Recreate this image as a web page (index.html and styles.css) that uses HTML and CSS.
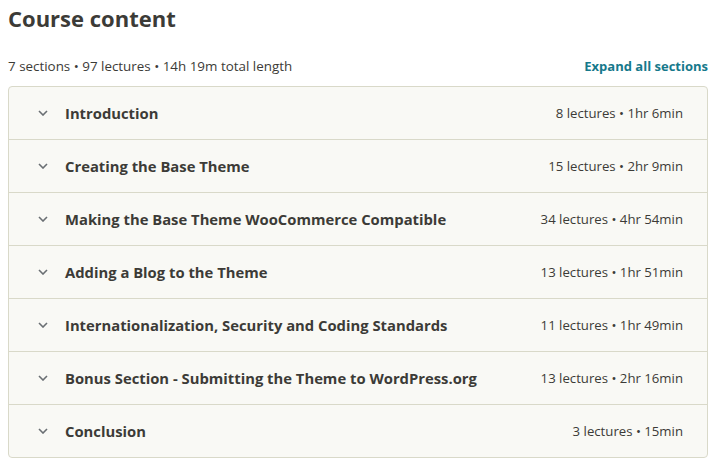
FILE: index.html
```html
<!DOCTYPE html>
<html>
<head>
<meta charset="utf-8">
<link rel="stylesheet" href="styles.css">
</head>
<body>
<div class="page">
  <h2 class="title">Course content</h2>
  <div class="summary">
    <span class="stats">7 sections • 97 lectures • 14h 19m total length</span>
    <a class="expand" href="#">Expand all sections</a>
  </div>
  <div class="sections">
    <div class="row"><svg class="chev" viewBox="0 0 10 6"><path d="M1 1l4 4 4-4" fill="none" stroke="#6a6f73" stroke-width="1.6"/></svg><span class="name">Introduction</span><span class="meta">8 lectures • 1hr 6min</span></div>
    <div class="row"><svg class="chev" viewBox="0 0 10 6"><path d="M1 1l4 4 4-4" fill="none" stroke="#6a6f73" stroke-width="1.6"/></svg><span class="name">Creating the Base Theme</span><span class="meta">15 lectures • 2hr 9min</span></div>
    <div class="row"><svg class="chev" viewBox="0 0 10 6"><path d="M1 1l4 4 4-4" fill="none" stroke="#6a6f73" stroke-width="1.6"/></svg><span class="name">Making the Base Theme WooCommerce Compatible</span><span class="meta">34 lectures • 4hr 54min</span></div>
    <div class="row"><svg class="chev" viewBox="0 0 10 6"><path d="M1 1l4 4 4-4" fill="none" stroke="#6a6f73" stroke-width="1.6"/></svg><span class="name">Adding a Blog to the Theme</span><span class="meta">13 lectures • 1hr 51min</span></div>
    <div class="row"><svg class="chev" viewBox="0 0 10 6"><path d="M1 1l4 4 4-4" fill="none" stroke="#6a6f73" stroke-width="1.6"/></svg><span class="name">Internationalization, Security and Coding Standards</span><span class="meta">11 lectures • 1hr 49min</span></div>
    <div class="row"><svg class="chev" viewBox="0 0 10 6"><path d="M1 1l4 4 4-4" fill="none" stroke="#6a6f73" stroke-width="1.6"/></svg><span class="name">Bonus Section - Submitting the Theme to WordPress.org</span><span class="meta">13 lectures • 2hr 16min</span></div>
    <div class="row"><svg class="chev" viewBox="0 0 10 6"><path d="M1 1l4 4 4-4" fill="none" stroke="#6a6f73" stroke-width="1.6"/></svg><span class="name">Conclusion</span><span class="meta">3 lectures • 15min</span></div>
  </div>
</div>
</body>
</html>
```
FILE: styles.css
```css
* { box-sizing: border-box; }
body {
  margin: 0;
  background: #fff;
  font-family: "Open Sans", "Noto Sans", sans-serif;
  color: #3c3b37;
}
.page {
  padding: 2px 10px 0 8px;
}
.title {
  margin: 0;
  font-size: 22px;
  font-weight: 700;
  line-height: 32px;
  color: #3c3b37;
}
.summary {
  display: flex;
  justify-content: space-between;
  align-items: center;
  margin-top: 21px;
  height: 22px;
}
.stats {
  font-size: 13.4px;
  line-height: 20px;
}
.expand {
  font-size: 13px;
  font-weight: 700;
  color: #16798b;
  text-decoration: none;
  line-height: 20px;
}
.sections {
  margin-top: 9px;
  border: 1px solid #d9d9c9;
  border-radius: 4px;
  background: #f9f9f5;
}
.row {
  display: flex;
  align-items: center;
  height: 53px;
  padding: 0 24px 0 29px;
  border-bottom: 1px solid #d9d9c9;
}
.row:last-child { border-bottom: none; height: 52px; }
.chev {
  width: 10px;
  height: 6px;
  margin-right: 17px;
  flex: none;
}
.name {
  flex: 1;
  font-size: 14.8px;
  font-weight: 700;
  color: #3c3b37;
}
.meta {
  font-size: 13.2px;
  color: #3c3b37;
}
```
